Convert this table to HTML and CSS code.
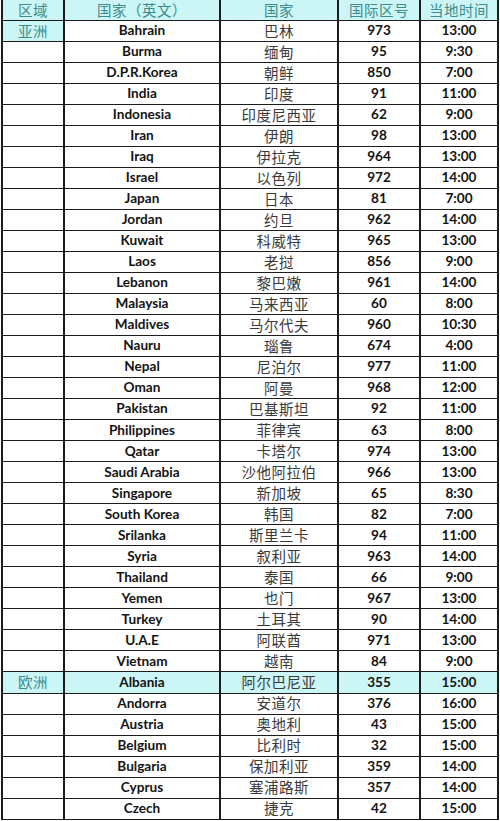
FILE: index.html
```html
<!DOCTYPE html>
<html lang="zh">
<head>
<meta charset="utf-8">
<link rel="stylesheet" href="styles.css">
</head>
<body>
<table class="sheet">
<colgroup><col class="c1"><col class="c2"><col class="c3"><col class="c4"><col class="c5"></colgroup>
<thead>
<tr class="head"><th>区域</th><th>国家（英文）</th><th>国家</th><th>国际区号</th><th>当地时间</th></tr>
</thead>
<tbody>
<tr><td class="region hl">亚洲</td><td class="en">Bahrain</td><td class="zh">巴林</td><td class="num">973</td><td class="num">13:00</td></tr>
<tr><td class="region"></td><td class="en">Burma</td><td class="zh">缅甸</td><td class="num">95</td><td class="num">9:30</td></tr>
<tr><td class="region"></td><td class="en">D.P.R.Korea</td><td class="zh">朝鲜</td><td class="num">850</td><td class="num">7:00</td></tr>
<tr><td class="region"></td><td class="en">India</td><td class="zh">印度</td><td class="num">91</td><td class="num">11:00</td></tr>
<tr><td class="region"></td><td class="en">Indonesia</td><td class="zh">印度尼西亚</td><td class="num">62</td><td class="num">9:00</td></tr>
<tr><td class="region"></td><td class="en">Iran</td><td class="zh">伊朗</td><td class="num">98</td><td class="num">13:00</td></tr>
<tr><td class="region"></td><td class="en">Iraq</td><td class="zh">伊拉克</td><td class="num">964</td><td class="num">13:00</td></tr>
<tr><td class="region"></td><td class="en">Israel</td><td class="zh">以色列</td><td class="num">972</td><td class="num">14:00</td></tr>
<tr><td class="region"></td><td class="en">Japan</td><td class="zh">日本</td><td class="num">81</td><td class="num">7:00</td></tr>
<tr><td class="region"></td><td class="en">Jordan</td><td class="zh">约旦</td><td class="num">962</td><td class="num">14:00</td></tr>
<tr><td class="region"></td><td class="en">Kuwait</td><td class="zh">科威特</td><td class="num">965</td><td class="num">13:00</td></tr>
<tr><td class="region"></td><td class="en">Laos</td><td class="zh">老挝</td><td class="num">856</td><td class="num">9:00</td></tr>
<tr><td class="region"></td><td class="en">Lebanon</td><td class="zh">黎巴嫩</td><td class="num">961</td><td class="num">14:00</td></tr>
<tr><td class="region"></td><td class="en">Malaysia</td><td class="zh">马来西亚</td><td class="num">60</td><td class="num">8:00</td></tr>
<tr><td class="region"></td><td class="en">Maldives</td><td class="zh">马尔代夫</td><td class="num">960</td><td class="num">10:30</td></tr>
<tr><td class="region"></td><td class="en">Nauru</td><td class="zh">瑙鲁</td><td class="num">674</td><td class="num">4:00</td></tr>
<tr><td class="region"></td><td class="en">Nepal</td><td class="zh">尼泊尔</td><td class="num">977</td><td class="num">11:00</td></tr>
<tr><td class="region"></td><td class="en">Oman</td><td class="zh">阿曼</td><td class="num">968</td><td class="num">12:00</td></tr>
<tr><td class="region"></td><td class="en">Pakistan</td><td class="zh">巴基斯坦</td><td class="num">92</td><td class="num">11:00</td></tr>
<tr><td class="region"></td><td class="en">Philippines</td><td class="zh">菲律宾</td><td class="num">63</td><td class="num">8:00</td></tr>
<tr><td class="region"></td><td class="en">Qatar</td><td class="zh">卡塔尔</td><td class="num">974</td><td class="num">13:00</td></tr>
<tr><td class="region"></td><td class="en">Saudi Arabia</td><td class="zh">沙他阿拉伯</td><td class="num">966</td><td class="num">13:00</td></tr>
<tr><td class="region"></td><td class="en">Singapore</td><td class="zh">新加坡</td><td class="num">65</td><td class="num">8:30</td></tr>
<tr><td class="region"></td><td class="en">South Korea</td><td class="zh">韩国</td><td class="num">82</td><td class="num">7:00</td></tr>
<tr><td class="region"></td><td class="en">Srilanka</td><td class="zh">斯里兰卡</td><td class="num">94</td><td class="num">11:00</td></tr>
<tr><td class="region"></td><td class="en">Syria</td><td class="zh">叙利亚</td><td class="num">963</td><td class="num">14:00</td></tr>
<tr><td class="region"></td><td class="en">Thailand</td><td class="zh">泰国</td><td class="num">66</td><td class="num">9:00</td></tr>
<tr><td class="region"></td><td class="en">Yemen</td><td class="zh">也门</td><td class="num">967</td><td class="num">13:00</td></tr>
<tr><td class="region"></td><td class="en">Turkey</td><td class="zh">土耳其</td><td class="num">90</td><td class="num">14:00</td></tr>
<tr><td class="region"></td><td class="en">U.A.E</td><td class="zh">阿联酋</td><td class="num">971</td><td class="num">13:00</td></tr>
<tr><td class="region"></td><td class="en">Vietnam</td><td class="zh">越南</td><td class="num">84</td><td class="num">9:00</td></tr>
<tr class="hl"><td class="region">欧洲</td><td class="en">Albania</td><td class="zh">阿尔巴尼亚</td><td class="num">355</td><td class="num">15:00</td></tr>
<tr><td class="region"></td><td class="en">Andorra</td><td class="zh">安道尔</td><td class="num">376</td><td class="num">16:00</td></tr>
<tr><td class="region"></td><td class="en">Austria</td><td class="zh">奥地利</td><td class="num">43</td><td class="num">15:00</td></tr>
<tr><td class="region"></td><td class="en">Belgium</td><td class="zh">比利时</td><td class="num">32</td><td class="num">15:00</td></tr>
<tr><td class="region"></td><td class="en">Bulgaria</td><td class="zh">保加利亚</td><td class="num">359</td><td class="num">14:00</td></tr>
<tr><td class="region"></td><td class="en">Cyprus</td><td class="zh">塞浦路斯</td><td class="num">357</td><td class="num">14:00</td></tr>
<tr><td class="region"></td><td class="en">Czech</td><td class="zh">捷克</td><td class="num">42</td><td class="num">15:00</td></tr>
</tbody>
</table>
</body>
</html>
```
FILE: styles.css
```css
html, body {
  margin: 0;
  padding: 0;
  background: #ffffff;
}
.sheet {
  border-collapse: collapse;
  table-layout: fixed;
  width: 496px;
  margin: -1px 0 0 1px;
  font-family: "Noto Sans CJK SC", sans-serif;
}
.c1 { width: 62px; }
.c2 { width: 156px; }
.c3 { width: 118px; }
.c4 { width: 82px; }
.c5 { width: 78px; }
.sheet th,
.sheet td {
  padding: 0;
  text-align: center;
  vertical-align: middle;
  border-top: 1px solid #1c1c1c;
  border-bottom: 1px solid #1c1c1c;
  border-left: 2px solid #1c1c1c;
  border-right: 2px solid #1c1c1c;
  white-space: nowrap;
  overflow: hidden;
  line-height: 1;
}
.sheet tbody tr {
  height: 21.03px;
}
.head {
  height: 21px;
  background: #ccf6f6;
}
.head th {
  font-weight: normal;
  font-size: 14.5px;
  color: #3c8a8a;
  letter-spacing: 0.5px;
}
.hl {
  background: #ccf6f6;
}
.region {
  font-size: 14.5px;
  color: #3c8a8a;
  letter-spacing: 0.5px;
}
.en,
.num {
  font-family: Lato, "Liberation Sans", sans-serif;
  font-weight: bold;
  font-size: 13.6px;
  color: #141414;
}
.zh {
  font-size: 14.5px;
  color: #3a3a3a;
  letter-spacing: 0.5px;
}
```
